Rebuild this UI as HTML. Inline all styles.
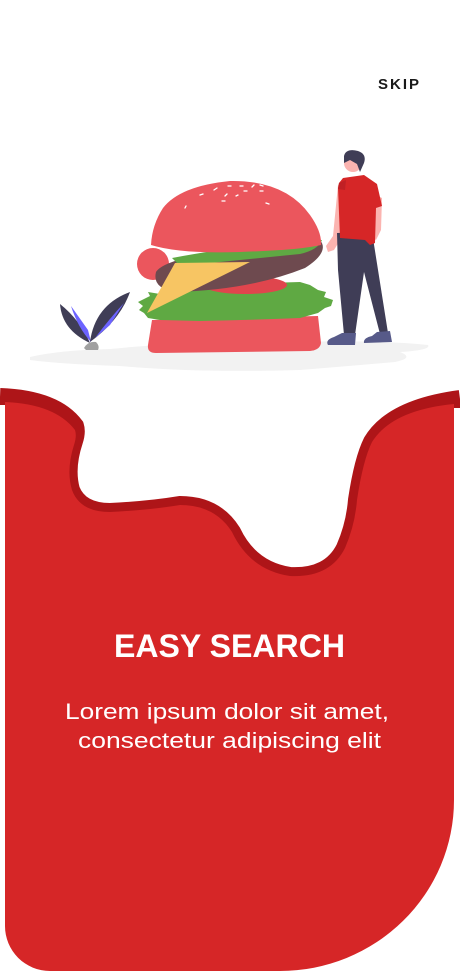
<!DOCTYPE html>
<html><head><meta charset="utf-8"><style>
html,body{margin:0;padding:0;background:#fff;width:460px;height:972px;overflow:hidden;font-family:"Liberation Sans",sans-serif}
svg{position:absolute;left:0;top:0}
</style></head><body>
<svg width="460" height="972" viewBox="0 0 460 972" xmlns="http://www.w3.org/2000/svg">
<!-- ground -->
<path d="M30 357 Q60 350 110 349 Q200 340 300 342 Q380 340 428 345 Q432 350 400 352 Q415 358 395 362 Q350 366 300 370 Q200 373 120 366 Q60 364 30 360Z" fill="#f2f2f2"/>
<!-- plant -->
<path d="M60 304 Q62 330 90 343 Q80 320 60 304Z" fill="#3f3d56"/>
<path d="M71 306 Q78 328 91 342 L88 330 Z" fill="#6c63ff"/>
<path d="M90 342 Q95 305 130 292 Q120 320 90 342Z" fill="#3f3d56"/>
<path d="M95 338 Q110 318 124 303 L110 325Z" fill="#6c63ff"/>
<path d="M84 348 Q88 341 96 342 Q100 346 98 350 L86 350Z" fill="#a0a0a0"/>
<!-- burger bottom bun -->
<path d="M152 320 L318 316 L321 343 Q320 350 310 351 L156 353 Q147 353 148 345Z" fill="#eb565d"/>
<!-- lettuce -->
<path d="M142 300 L150 296 L148 292 L160 294 L170 286 L300 282 L310 285 L318 290 L326 292 L324 297 L333 300 L331 306 L325 308 L318 313 L300 318 Q250 320 200 321 L160 320 L148 318 L144 313 L139 310 L143 306 L138 302Z" fill="#5fa943"/>
<!-- tomato left -->
<circle cx="153" cy="264" r="16" fill="#eb565d"/>
<ellipse cx="245" cy="285" rx="42" ry="9" fill="#e0454d"/>
<!-- patty -->
<path d="M156 272 Q168 252 320 240 Q330 252 305 268 Q250 290 175 292 Q152 288 156 272Z" fill="#6e4a4f"/>
<!-- top lettuce strip -->
<path d="M172 258 Q240 245 322 240 Q318 250 300 254 Q240 260 180 266Z" fill="#5fa943"/>
<!-- cheese -->
<path d="M147 313 L175 263 L250 262 Z" fill="#f7c563"/>
<!-- top bun -->
<path d="M151 245 Q152 225 163 208 Q180 186 230 181 Q285 180 310 215 Q322 232 321 245 Q300 250 240 252 Q180 254 151 245Z" fill="#eb565d"/>
<g stroke="#fff" stroke-width="1.3" stroke-linecap="round">
<path d="M200 195l3-1M214 190l3-2M228 186l3 0M240 186l3 0M252 187l2-2M225 196l2-2M236 196l2 -1M244 191l3 0M260 191l3 0M266 203l3 1M222 201l3 0M185 208l1-2M260 185l3 1"/>
</g>
<!-- man -->
<path d="M342 237 L334 250 L328 252 L326 246 L333 236 L338 185 L344 185Z" fill="#fbb4b0"/>
<path d="M376 195 L382 198 L381 230 L376 240 L373 238Z" fill="#fbb4b0"/>
<path d="M337 233 L372 232 L388 333 L380 334 L364 272 L355 335 L344 335 L338 270Z" fill="#3f3d56"/>
<path d="M342 333 L356 333 L355 345 L328 345 Q325 340 334 337Z" fill="#575a89"/>
<path d="M377 332 L390 331 L392 342 L364 343 Q363 338 372 336Z" fill="#575a89"/>
<circle cx="353" cy="163" r="9" fill="#fbb4b0"/>
<path d="M344 156 Q346 148 358 151 Q367 154 364 163 L360 172 L357 164 L350 160 L344 163Z" fill="#3f3d56"/>
<path d="M343 178 L364 175 L377 184 L382 206 L376 208 L375 243 L370 245 L365 240 L340 238 L338 188 L339 183Z" fill="#d62627"/>
<path d="M339 183 L346 180 L345 190 L338 189Z" fill="#c02025"/>
<!-- dark band (stroke along top edge) -->
<path d="M0 397 Q55 399 75 426 Q77 432 74 441 Q65 468 71 490 Q80 512 110 512 Q150 510 180 505 Q215 505 232 532 Q250 570 290 576 Q330 578 345 548 Q355 525 357 500 Q363 460 372 442 Q392 408 460 399" fill="none" stroke="#ae1518" stroke-width="18"/>
<!-- red panel -->
<path d="M5 402 Q55 404 75 430 Q77 436 74 445 Q66 470 72 490 Q80 512 110 512 Q150 510 180 505 Q215 505 232 532 Q250 570 290 576 Q330 578 345 548 Q355 525 357 500 Q363 460 372 442 Q392 410 454 404 L454 800 A174 171 0 0 1 280 971 L50 971 A45 45 0 0 1 5 926Z" fill="#d62627"/>
<rect x="0" y="405" width="5" height="567" fill="#fff"/>
<rect x="454" y="408" width="6" height="564" fill="#fff"/>
<text x="421" y="89" text-anchor="end" font-family="Liberation Sans, sans-serif" font-size="15" font-weight="bold" letter-spacing="2" fill="#1a1a1a">SKIP</text>
<text x="114" y="657" textLength="231" lengthAdjust="spacingAndGlyphs" font-family="Liberation Sans, sans-serif" font-size="32" font-weight="bold" fill="#fff">EASY SEARCH</text>
<text x="65" y="719" textLength="324" lengthAdjust="spacingAndGlyphs" font-family="Liberation Sans, sans-serif" font-size="22" fill="#fff">Lorem ipsum dolor sit amet,</text>
<text x="78" y="748" textLength="303" lengthAdjust="spacingAndGlyphs" font-family="Liberation Sans, sans-serif" font-size="22" fill="#fff">consectetur adipiscing elit</text>
</svg>
</body></html>
